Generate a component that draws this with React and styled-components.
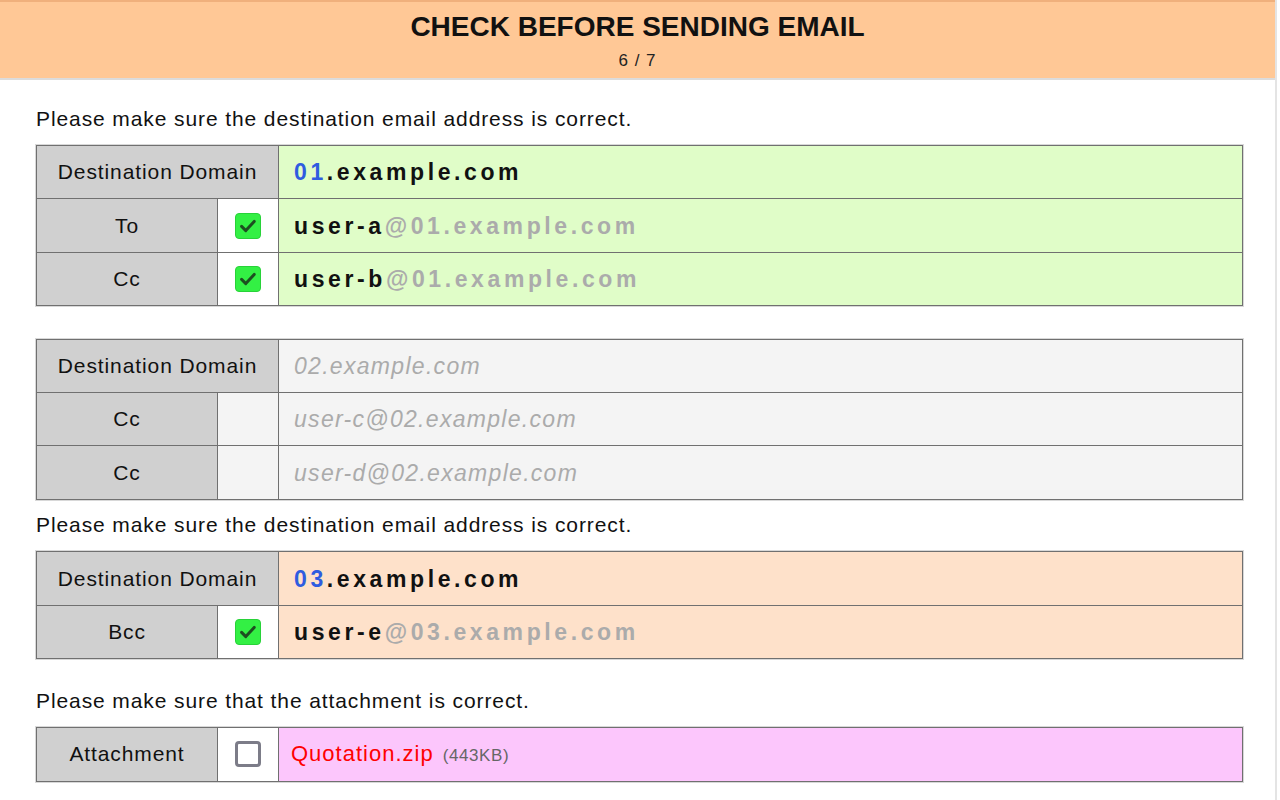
import React from "react";
import styled, { createGlobalStyle } from "styled-components";

const Global = createGlobalStyle`
  html, body { margin: 0; padding: 0; background: #fff; }
  body { font-family: "Liberation Sans", Arial, sans-serif; color: #111; }
`;

const Page = styled.div`
  width: 1277px;
  min-height: 800px;
  border-right: 2px solid #e4e4e4;
  box-sizing: border-box;
`;

const Header = styled.header`
  background: #ffc896;
  border-top: 2px solid #f0b07c;
  border-bottom: 2px solid #dcdcdc;
  height: 80px;
  box-sizing: border-box;
  display: flex;
  flex-direction: column;
  align-items: center;
  padding-top: 8px;
`;

const Title = styled.h1`
  margin: 0;
  font-size: 28px;
  font-weight: bold;
  line-height: 34px;
  color: #111;
`;

const Counter = styled.div`
  font-size: 17px;
  line-height: 20px;
  letter-spacing: 1px;
  margin-top: 7px;
  color: #222;
`;

const Content = styled.main`
  padding: 27px 36px 0 36px;
  display: flex;
  flex-direction: column;
`;

const Notice = styled.p`
  margin: ${(p) => p.$mt || 0}px 0 ${(p) => p.$mb || 14}px 0;
  font-size: 21px;
  line-height: 24px;
  letter-spacing: 0.9px;
  color: #111;
`;

const Table = styled.table`
  width: 1207px;
  border-collapse: collapse;
  margin-bottom: ${(p) => p.$mb || 0}px;
  box-shadow: 0 0 0 1px #d8d8d8;
  table-layout: fixed;
`;

const Row = styled.tr`
  height: 53.4px;
`;

const Label = styled.td`
  background: #d0d0d0;
  border: 1px solid #707070;
  text-align: center;
  font-size: 21px;
  line-height: 24px;
  letter-spacing: 0.9px;
  color: #111;
  padding: 0;
`;

const CheckCell = styled.td`
  background: ${(p) => p.$bg || "#fff"};
  border: 1px solid #707070;
  text-align: center;
  vertical-align: middle;
  padding: 0;
  line-height: 24px;
`;

const Value = styled.td`
  background: ${(p) => p.$bg};
  border: 1px solid #707070;
  padding: 0 0 0 15px;
  font-size: 23px;
  line-height: 26px;
  font-weight: ${(p) => (p.$muted ? "normal" : "bold")};
  font-style: ${(p) => (p.$muted ? "italic" : "normal")};
  letter-spacing: ${(p) => (p.$muted ? "1.3px" : "3.6px")};
  color: ${(p) => (p.$muted ? "#ababab" : "#111")};
  white-space: nowrap;
`;

const Sub = styled.span`
  color: ${(p) => p.$color};
`;

const FileName = styled.span`
  color: #ff0000;
  font-size: 22px;
  font-weight: normal;
  letter-spacing: 1px;
  margin-left: -3px;
`;

const FileSize = styled.span`
  color: #666;
  font-size: 17px;
  font-weight: normal;
  letter-spacing: 0.6px;
  margin-left: 9px;
`;

const Box = styled.span`
  display: inline-flex;
  align-items: center;
  justify-content: center;
  width: 26px;
  height: 26px;
  box-sizing: border-box;
  border-radius: 4px;
  vertical-align: middle;
  background: ${(p) => (p.$checked ? "#33f044" : "#fff")};
  border: ${(p) => (p.$checked ? "1px solid #28d239" : "3px solid #7c7c88")};
`;

function Check({ checked }) {
  return (
    <Box $checked={checked}>
      {checked && (
        <svg width="20" height="20" viewBox="0 0 20 20">
          <path
            d="M3.6 10.4 L7.8 14.6 L16.2 5.4"
            fill="none"
            stroke="#1d4f20"
            strokeWidth="3"
            strokeLinecap="round"
            strokeLinejoin="round"
          />
        </svg>
      )}
    </Box>
  );
}

function Cols() {
  return (
    <colgroup>
      <col style={{ width: 181 }} />
      <col style={{ width: 61 }} />
      <col />
    </colgroup>
  );
}

function DomainRow({ bg, prefix, muted, text }) {
  return (
    <Row>
      <Label colSpan={2}>Destination Domain</Label>
      <Value $bg={bg} $muted={muted}>
        {muted ? (
          text
        ) : (
          <>
            <Sub $color="#2f5ce0">{prefix}</Sub>.example.com
          </>
        )}
      </Value>
    </Row>
  );
}

function AddrRow({ label, bg, checkBg, checked, user, domain, muted }) {
  return (
    <Row>
      <Label>{label}</Label>
      <CheckCell $bg={checkBg}>{checked !== undefined && <Check checked={checked} />}</CheckCell>
      <Value $bg={bg} $muted={muted}>
        {muted ? (
          `${user}@${domain}`
        ) : (
          <>
            {user}
            <Sub $color="#ababab">@{domain}</Sub>
          </>
        )}
      </Value>
    </Row>
  );
}

export default function App() {
  const green = "#e0fdc8";
  const gray = "#f4f4f4";
  const orange = "#fee1ca";
  const pink = "#fcc6fc";
  return (
    <Page>
      <Global />
      <Header>
        <Title>CHECK BEFORE SENDING EMAIL</Title>
        <Counter>6 / 7</Counter>
      </Header>
      <Content>
        <Notice>Please make sure the destination email address is correct.</Notice>
        <Table $mb={32.5}>
          <Cols />
          <tbody>
            <DomainRow bg={green} prefix="01" />
            <AddrRow label="To" bg={green} checked user="user-a" domain="01.example.com" />
            <AddrRow label="Cc" bg={green} checked user="user-b" domain="01.example.com" />
          </tbody>
        </Table>
        <Table>
          <Cols />
          <tbody>
            <DomainRow bg={gray} muted text="02.example.com" />
            <AddrRow label="Cc" bg={gray} checkBg={gray} muted user="user-c" domain="02.example.com" />
            <AddrRow label="Cc" bg={gray} checkBg={gray} muted user="user-d" domain="02.example.com" />
          </tbody>
        </Table>
        <Notice $mt={13} $mb={14.5}>Please make sure the destination email address is correct.</Notice>
        <Table>
          <Cols />
          <tbody>
            <DomainRow bg={orange} prefix="03" />
            <AddrRow label="Bcc" bg={orange} checked user="user-e" domain="03.example.com" />
          </tbody>
        </Table>
        <Notice $mt={30}>Please make sure that the attachment is correct.</Notice>
        <Table>
          <Cols />
          <tbody>
            <Row>
              <Label>Attachment</Label>
              <CheckCell>
                <Check checked={false} />
              </CheckCell>
              <Value $bg={pink}>
                <FileName>Quotation.zip</FileName>
                <FileSize>(443KB)</FileSize>
              </Value>
            </Row>
          </tbody>
        </Table>
      </Content>
    </Page>
  );
}
